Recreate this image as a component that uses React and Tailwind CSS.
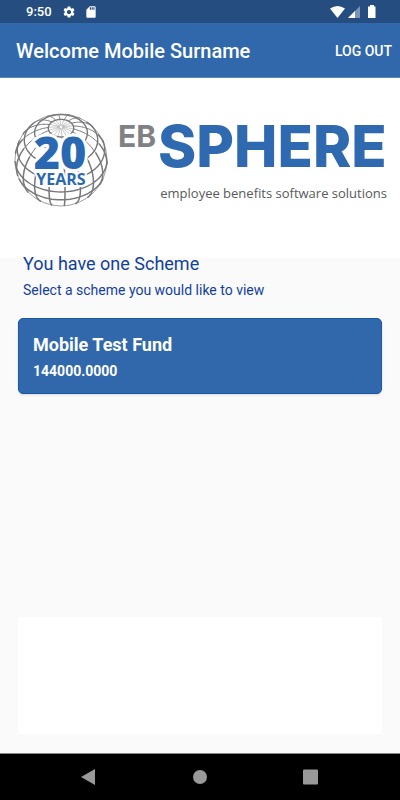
import { MdSettings, MdSdCard } from 'react-icons/md';

const R = 46;
const TILT = (44 * Math.PI) / 180;

// Orthographic projection of a point on the globe, tilted towards the viewer
const project = (lat, lon) => {
  const a = (lat * Math.PI) / 180;
  const o = (lon * Math.PI) / 180;
  const x = Math.cos(a) * Math.sin(o);
  const y = Math.sin(a) * Math.cos(TILT) - Math.cos(a) * Math.cos(o) * Math.sin(TILT);
  const z = Math.sin(a) * Math.sin(TILT) + Math.cos(a) * Math.cos(o) * Math.cos(TILT);
  return { x: 47 + R * x, y: 47 - R * y, z };
};

const toPath = (points) => {
  let d = '';
  let pen = false;
  points.forEach((p) => {
    if (p.z < 0) {
      pen = false;
      return;
    }
    d += `${pen ? 'L' : 'M'}${p.x.toFixed(1)} ${p.y.toFixed(1)}`;
    pen = true;
  });
  return d;
};

const range = (from, to, step) => {
  const out = [];
  for (let i = from; i <= to; i += step) out.push(i);
  return out;
};

const meridians = range(-175, 175, 20).map((lon) => ({
  lower: toPath(range(-60, 34, 2).map((lat) => project(lat, lon))),
  upper: toPath(range(34, 74, 2).map((lat) => project(lat, lon))),
}));
const spokes = range(-175, 175, 20).map((lon) => toPath([project(75, lon), project(88, lon)]));
const parallels = [-16, 0, 18, 37, 55, 74].map((lat) => toPath(range(-180, 180, 4).map((lon) => project(lat, lon))));

function Globe() {
  return (
    <svg viewBox="0 0 94 94" className="h-[94px] w-[94px] shrink-0 overflow-visible" fill="none" stroke="#77787b">
      <circle cx="47" cy="47" r="46" strokeWidth="0.7" />
      {meridians.map((m, i) => (
        <g key={i}>
          <path d={m.lower} strokeWidth="1.5" />
          <path d={m.upper} strokeWidth="1" />
        </g>
      ))}
      {parallels.map((d, i) => <path key={i} d={d} strokeWidth="1.4" />)}
      {spokes.map((d, i) => <path key={i} d={d} strokeWidth="0.4" />)}
      <g
        fill="#2a69b2"
        stroke="#fff"
        strokeWidth="6"
        strokeLinejoin="round"
        paintOrder="stroke"
        textAnchor="middle"
        fontFamily="'Open Sans', sans-serif"
      >
        <text x="46" y="56" fontSize="45" fontWeight="800">20</text>
        <text x="47" y="72" fontSize="16" fontWeight="700" strokeWidth="4">YEARS</text>
      </g>
    </svg>
  );
}

function Wordmark() {
  return (
    <svg viewBox="0 0 270 86" className="h-[86px] w-[270px] shrink-0 overflow-visible">
      <g fontFamily="Inter, sans-serif">
        <text x="-1" y="34" fontSize="30" fontWeight="700" fill="#808184">EB</text>
        <text x="39" y="54" fontSize="58" fontWeight="800" fill="#2f69b0">SPHERE</text>
      </g>
      <text x="268" y="85" fontSize="13" textAnchor="end" fill="#58595b" fontFamily="'Open Sans', sans-serif">
        employee benefits software solutions
      </text>
    </svg>
  );
}

function StatusBar() {
  return (
    <div className="flex h-[23px] items-center justify-between bg-[#254d7f] pl-[26px] pr-6 text-white">
      <div className="flex items-center gap-2">
        <span className="pr-0.5 text-[13px] leading-4 font-medium">9:50</span>
        <MdSettings className="h-[14px] w-[14px]" />
        <MdSdCard className="h-[14px] w-[14px]" />
      </div>
      <svg viewBox="0 0 47 14" className="h-[14px] w-[47px]" fill="#fff">
        <path d="M1 3.6Q8.500-1.500 16 3.600L8.500 13Z" />
        <path d="M31 1V13H19Z" opacity=".4" />
        <path d="M26 6V13H19Z" />
        <path d="M39 1.500h2V0h4v1.500h1.500V13H39Z" />
      </svg>
    </div>
  );
}

export default function App() {
  return (
    <div className="flex min-h-screen flex-col bg-[#fafafa] font-['Roboto',sans-serif]">
      <StatusBar />

      <header className="flex h-[55px] items-center justify-between border-b border-[#5b88bd] bg-[#3068ab] pt-0.5 pl-4 pr-2 text-white">
        <h1 className="text-xl font-medium">Welcome Mobile Surname</h1>
        <button type="button" className="text-sm font-medium">LOG OUT</button>
      </header>

      <div className="flex h-[180px] items-start gap-[11px] bg-white pl-[14px] pt-[35px]">
        <Globe />
        <Wordmark />
      </div>

      <main className="flex flex-1 flex-col px-[18px] pb-[19px]">
        <div className="px-[5px] text-[#123f9c]">
          <h2 className="text-lg leading-3">You have one Scheme</h2>
          <p className="pt-2.5 text-sm">Select a scheme you would like to view</p>
        </div>

        <button type="button" className="mt-[18px] rounded-[5px] border border-[#1858a5] bg-[#3068ab] px-[14px] pt-4 pb-3.5 text-left text-white shadow-sm">
          <span className="block text-lg leading-5 font-bold">Mobile Test Fund</span>
          <span className="block pt-2 text-sm leading-4 font-bold">144000.0000</span>
        </button>

        <div className="mt-auto h-[117px] bg-white" />
      </main>

      <nav className="flex h-[47px] items-center justify-between border-t border-[#888] bg-black pl-20 pr-[81px]">
        <button type="button" aria-label="Back">
          <svg viewBox="0 0 16 16" className="h-4 w-4" fill="#999"><path d="M15 0V16L1 8Z" /></svg>
        </button>
        <button type="button" aria-label="Home">
          <svg viewBox="0 0 16 16" className="h-4 w-4" fill="#999"><circle cx="8" cy="8" r="7" /></svg>
        </button>
        <button type="button" aria-label="Overview">
          <svg viewBox="0 0 16 16" className="h-4 w-4" fill="#999"><rect y="0.5" width="15" height="15" rx="1" /></svg>
        </button>
      </nav>
    </div>
  );
}
